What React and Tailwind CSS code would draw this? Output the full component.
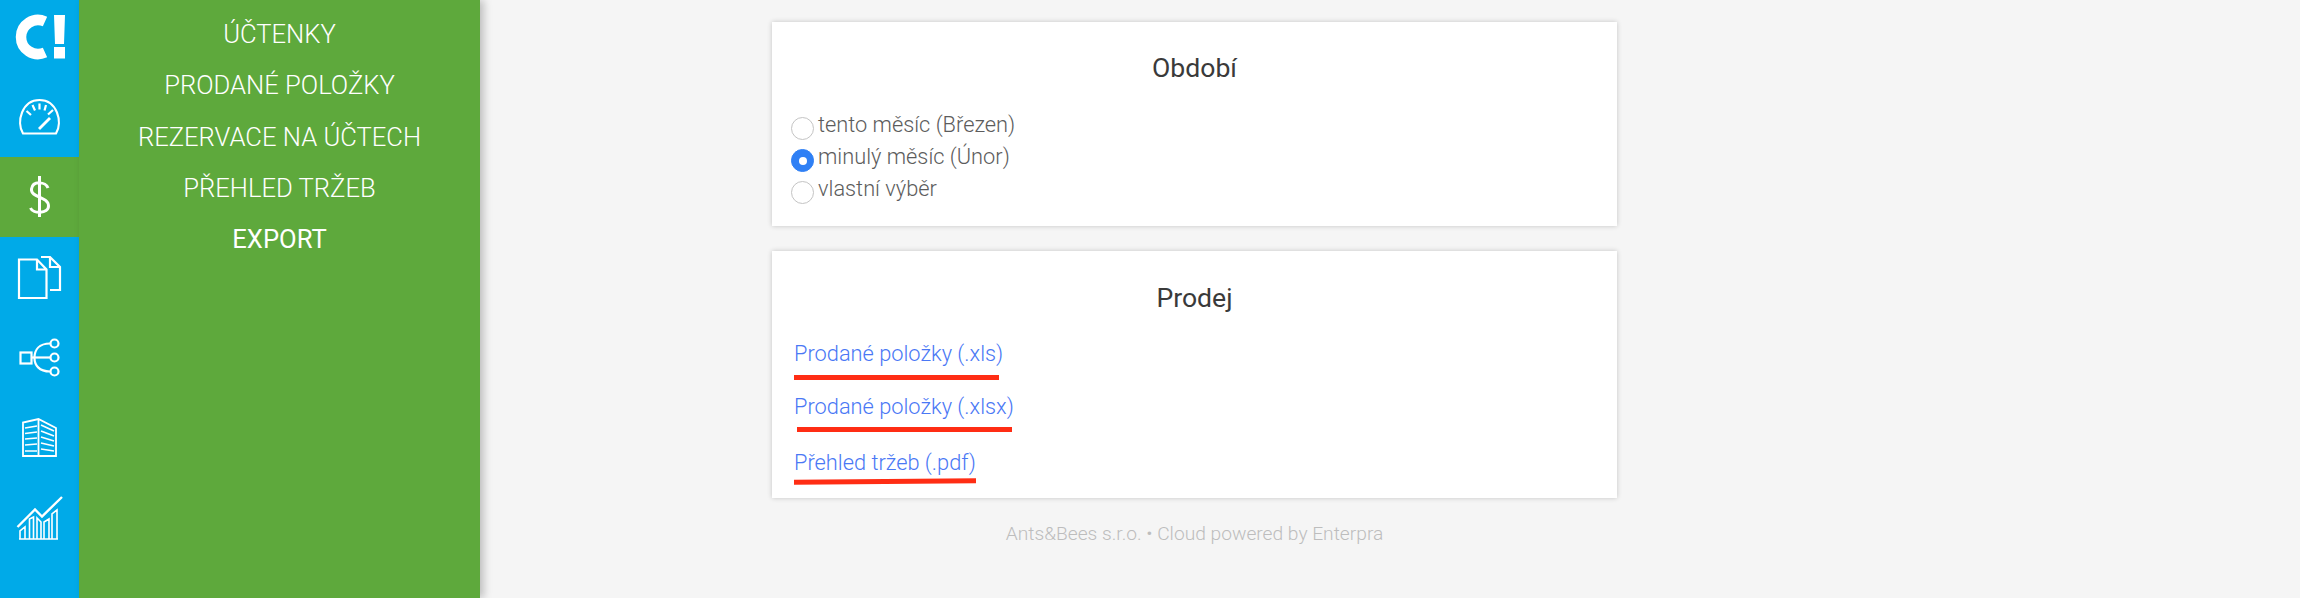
const Cell = ({ y, active, children }) => (
  <div className={`h-[80px] w-full ${active ? "bg-[#5ea93c]" : ""}`}>
    <svg viewBox={`0 ${y} 79 80`} className="block h-[80px] w-[79px]" fill="none" stroke="#fff" strokeWidth="2.2">
      {children}
    </svg>
  </div>
);

const Radio = ({ checked, label }) => (
  <div className="flex h-[32px] items-start">
    <span
      className={`mt-[8px] flex h-[23px] w-[23px] shrink-0 items-center justify-center rounded-full border ${
        checked ? "border-[#2f80f5] bg-[#2f80f5]" : "border-[#c4c4c4] bg-white"
      }`}
    >
      {checked && <span className="h-[8px] w-[8px] rounded-full bg-white" />}
    </span>
    <span className="ml-[4px] text-[21.8px] leading-[32px] font-light text-[#5c5c5c]">{label}</span>
  </div>
);

const ExportLink = ({ label, className, lineClass }) => (
  <div className={className}>
    <a className="block text-[21.8px] leading-[30px] font-light text-[#4a78f5]">{label}</a>
    <div className={`h-[5px] bg-[#ff2d14] ${lineClass}`} />
  </div>
);

export default function App() {
  const nav = ["ÚČTENKY", "PRODANÉ POLOŽKY", "REZERVACE NA ÚČTECH", "PŘEHLED TRŽEB"];
  return (
    <div className="flex h-[598px] w-[2300px] overflow-hidden bg-[#f5f5f5] font-['Roboto',sans-serif]">
      <aside className="w-[79px] shrink-0 bg-[#00aae8]">
        <svg viewBox="0 0 79 77" className="block h-[77px] w-[79px]">
          <path d="M45 21.5 A17 17 0 1 0 45 52.5" fill="none" stroke="#fff" strokeWidth="10.5" />
          <path d="M54 15 H65 L64 44 H55 Z M54 47 H65 V58.5 H54 Z" fill="#fff" />
        </svg>
        <Cell y={77}>
          <path d="M23 133.5 C16 122 22 100 39.5 100 C57 100 63 122 56 133.5 Z" />
          <path d="M26.5 111 L31 115 M32.5 105 L35 110.5 M39.5 103.5 V109.5 M46 105 L44.5 110.5 M53 110 L48 114.5" />
          <path d="M39 129 L50 118" strokeWidth="2.8" />
        </Cell>
        <Cell y={157} active>
          <path d="M48 188 C46 182 33 180 31.5 189 C30.5 198 48.5 196 48.5 206 C48.5 214 33 214 30.5 208 M39.5 176 V217" strokeWidth="3" />
        </Cell>
        <Cell y={237}>
          <path d="M19 259.5 H37 L46.5 269.5 V298 H19 Z M37 259.5 V269.5 H46.5" />
          <path d="M41 257 H50 L60 267 V290 H50 M50 257 V267 H60" />
        </Cell>
        <Cell y={317}>
          <rect x="20.5" y="352.5" width="11" height="11" />
          <path d="M31 357.5 H50" />
          <circle cx="54.5" cy="343.5" r="4" />
          <circle cx="54.5" cy="357.5" r="4" />
          <circle cx="54.5" cy="371.5" r="4" />
          <path d="M50 343.5 C39 343.5 34.5 350 34.5 358 C34.5 365 39 371.5 50 371.5" />
        </Cell>
        <Cell y={397}>
          <path d="M23 456 V422.5 L38.5 419 L56 428 V456 Z M38.5 419 V456" strokeWidth="1.8" />
          <path d="M25 428 L37 426 M25 433.5 L37 432 M25 439 L37 438 M25 445 L37 444 M25 451 L37 451 M41 425 L54 431 M41 431 L54 436 M41 437 L54 441 M41 443 L54 446 M41 449 L54 451" strokeWidth="1.6" />
        </Cell>
        <Cell y={477}>
          <path d="M17.5 527 L35 509.5 L42 516.5 L62 497" strokeWidth="2.4" />
          <path d="M20 539 V531 L25 527 V539 Z M29.5 539 V519 L33.5 517 V539 M37 539 V518 L41 522 V539 M44 539 V522 L49 519 V539 M52 539 V514 L57 510 V539 M19 539 H58" strokeWidth="1.6" />
        </Cell>
      </aside>

      <nav className="w-[401px] shrink-0 bg-[#5ea93c] pt-[9px] text-center text-[25.6px] leading-[51.3px] font-light text-white shadow-[4px_0_8px_rgba(0,0,0,0.22)]">
        {nav.map((n) => (
          <div key={n}>{n}</div>
        ))}
        <div className="font-normal">EXPORT</div>
      </nav>

      <main className="ml-[292px] w-[845px] pt-[22px]">
        <section className="h-[204px] bg-white pt-[29px] pl-[19px] shadow-[0_0_5px_rgba(0,0,0,0.2)]">
          <h2 className="pr-[19px] text-center text-[26.6px] leading-[34px] font-normal text-[#3a3a3a]">Období</h2>
          <div className="mt-[24px]">
            <Radio label="tento měsíc (Březen)" />
            <Radio checked label="minulý měsíc (Únor)" />
            <Radio label="vlastní výběr" />
          </div>
        </section>

        <section className="mt-[25px] h-[247px] bg-white pt-[30px] pl-[22px] shadow-[0_0_5px_rgba(0,0,0,0.2)]">
          <h2 className="pr-[22px] text-center text-[26.6px] leading-[34px] font-normal text-[#3a3a3a]">Prodej</h2>
          <div className="mt-[24px] flex flex-col">
            <ExportLink label="Prodané položky (.xls)" lineClass="mt-[6px] w-[205px]" />
            <ExportLink className="mt-[12px]" label="Prodané položky (.xlsx)" lineClass="mt-[5px] ml-[3px] w-[215px]" />
            <ExportLink className="mt-[16px]" label="Přehled tržeb (.pdf)" lineClass="mt-[1px] w-[182px] -rotate-[0.4deg]" />
          </div>
        </section>

        <p className="mt-[24px] text-center text-[19.2px] leading-[24px] font-light text-[#bdbdbd]">
          Ants&amp;Bees s.r.o. • Cloud powered by Enterpra
        </p>
      </main>
    </div>
  );
}
